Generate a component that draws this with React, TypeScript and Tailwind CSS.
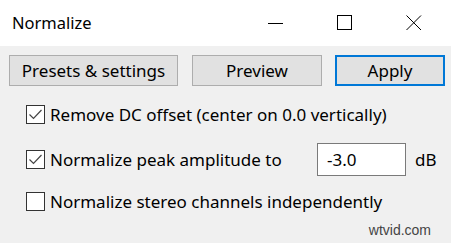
import { useState } from 'react'

function Check({ checked }: { checked: boolean }) {
  return (
    <span className="w-[19px] h-[19px] border border-[#333] bg-white flex items-center justify-center shrink-0">
      {checked && (
        <svg width="17" height="17" viewBox="0 0 17 17">
          <path d="M2.5 8.5 L6.5 12.5 L14.5 4" fill="none" stroke="#444" strokeWidth="1.2" />
        </svg>
      )}
    </span>
  )
}

export default function App() {
  const [dc, setDc] = useState(true)
  const [peak, setPeak] = useState(true)
  const [stereo, setStereo] = useState(false)
  const [level, setLevel] = useState('-3.0')

  return (
    <div
      className="w-[451px] h-[243px] bg-[#f0f0f0] text-black flex flex-col overflow-hidden"
      style={{ fontFamily: '"Noto Sans", "Segoe UI", sans-serif' }}
    >
      {/* Title bar */}
      <div className="h-[46px] bg-white flex items-center shrink-0">
        <span className="pl-[12px] text-[16.5px] flex-1">Normalize</span>
        <div className="flex items-center h-full">
          <button className="w-[69px] h-full flex items-center justify-center">
            <svg width="16" height="16" viewBox="0 0 16 16">
              <path d="M0 8.5 H15" stroke="#000" strokeWidth="1" />
            </svg>
          </button>
          <button className="w-[69px] h-full flex items-center justify-center">
            <svg width="16" height="16" viewBox="0 0 16 16">
              <rect x="0.5" y="0.5" width="14" height="14" fill="none" stroke="#000" strokeWidth="1" />
            </svg>
          </button>
          <button className="w-[69px] h-full flex items-center justify-center mr-[3px]">
            <svg width="16" height="16" viewBox="0 0 16 16">
              <path d="M0.5 0.5 L15 15 M15 0.5 L0.5 15" stroke="#000" strokeWidth="1" />
            </svg>
          </button>
        </div>
      </div>

      {/* Buttons */}
      <div className="flex gap-[14px] pl-[9px] pt-[9px] text-[17px]">
        <button className="w-[169px] h-[31px] bg-[#e1e1e1] border border-[#adadad] flex items-center justify-center">
          Presets &amp; settings
        </button>
        <button className="w-[130px] h-[31px] bg-[#e1e1e1] border border-[#adadad] flex items-center justify-center">
          Preview
        </button>
        <button className="w-[110px] h-[31px] ml-[-1px] bg-[#e1e1e1] border-2 border-[#0078d7] flex items-center justify-center">
          Apply
        </button>
      </div>

      {/* Options */}
      <div className="flex flex-col pl-[26px] pt-[19px] text-[17px]">
        <label className="flex items-center gap-[5px] h-[19px] cursor-default" onClick={() => setDc(!dc)}>
          <Check checked={dc} />
          <span>Remove DC offset (center on 0.0 vertically)</span>
        </label>
        <div className="flex items-center h-[19px] mt-[26px]">
          <label className="flex items-center gap-[5px] w-[291px] cursor-default" onClick={() => setPeak(!peak)}>
            <Check checked={peak} />
            <span>Normalize peak amplitude to</span>
          </label>
          <input
            value={level}
            onChange={(e) => setLevel(e.target.value)}
            className="w-[89px] h-[33px] border border-[#7a7a7a] bg-white px-[9px] outline-none text-[17px]"
          />
          <span className="ml-[9px]">dB</span>
        </div>
        <label className="flex items-center gap-[5px] h-[19px] mt-[23px] cursor-default" onClick={() => setStereo(!stereo)}>
          <Check checked={stereo} />
          <span>Normalize stereo channels independently</span>
        </label>
      </div>

      <div className="flex justify-end pr-[20px] mt-auto pb-[2px]">
        <span className="text-[14px] text-[#444]" style={{ fontFamily: 'Arial, "Liberation Sans", sans-serif' }}>wtvid.com</span>
      </div>
    </div>
  )
}
